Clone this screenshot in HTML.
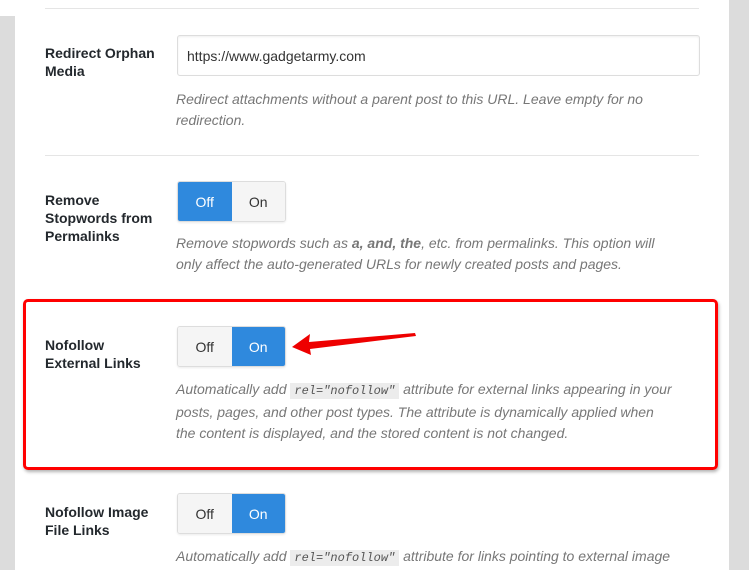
<!DOCTYPE html>
<html><head><style>
*{margin:0;padding:0;box-sizing:border-box}
body{width:749px;height:570px;overflow:hidden;background:#fff;font-family:"Liberation Sans",sans-serif;position:relative}
.abs{position:absolute}
.lbl{position:absolute;left:45px;font-size:14px;font-weight:bold;color:#23282d;line-height:18px}
.desc{position:absolute;left:176px;font-size:14px;font-style:italic;color:#777;line-height:21px;width:530px}
.sep{position:absolute;left:45px;width:654px;height:1px;background:#e5e5e5}
.tg{position:absolute;left:177px;width:109px;height:41px;border:1px solid #ddd;border-radius:3px;display:flex;overflow:hidden;box-shadow:0 1px 2px rgba(0,0,0,.08)}
.tg div{width:54px;display:flex;align-items:center;justify-content:center;font-size:14px;color:#333;background:#f5f5f5}
.tg div.on{background:#2f89dd;color:#fff}
code{font-family:"Liberation Mono",monospace;font-style:italic;background:#ececec;padding:1px 4px;font-size:12px;color:#555}
</style></head><body>
<div class="abs" style="left:0;top:16px;width:15px;height:554px;background:#dcdcdc"></div>
<div class="abs" style="left:729px;top:0;width:20px;height:570px;background:#dcdcdc"></div>
<div class="sep" style="top:8px"></div>
<div class="lbl" style="top:44px">Redirect Orphan<br>Media</div>
<div class="abs" style="left:177px;top:35px;width:523px;height:41px;border:1px solid #ddd;border-radius:3px;box-shadow:inset 0 1px 2px rgba(0,0,0,.07);font-size:14px;color:#333;padding:12px 0 0 9px">https://www.gadgetarmy.com</div>
<div class="desc" style="top:89px;width:500px">Redirect attachments without a parent post to this URL. Leave empty for no redirection.</div>
<div class="sep" style="top:155px"></div>
<div class="lbl" style="top:191px">Remove<br>Stopwords from<br>Permalinks</div>
<div class="tg" style="top:181px"><div class="on">Off</div><div>On</div></div>
<div class="desc" style="top:233px">Remove stopwords such as <b>a, and, the</b>, etc. from permalinks. This option will<br>only affect the auto-generated URLs for newly created posts and pages.</div>
<div class="abs" style="left:23px;top:299px;width:695px;height:171px;border:3px solid #f00;border-radius:5px;box-shadow:1px 2px 3px rgba(0,0,0,.3)"></div>
<div class="lbl" style="top:336px">Nofollow<br>External Links</div>
<div class="tg" style="top:326px"><div>Off</div><div class="on">On</div></div>
<svg class="abs" style="left:288px;top:328px" width="132" height="28"><polygon points="4,19 22,6 21,14 127,5 128,8 22,21 23,27" fill="#ee0000"/></svg>
<div class="desc" style="top:379px">Automatically add <code>rel="nofollow"</code> attribute for external links appearing in your<br>posts, pages, and other post types. The attribute is dynamically applied when<br>the content is displayed, and the stored content is not changed.</div>
<div class="lbl" style="top:503px">Nofollow Image<br>File Links</div>
<div class="tg" style="top:493px"><div>Off</div><div class="on">On</div></div>
<div class="desc" style="top:546px;white-space:nowrap">Automatically add <code>rel="nofollow"</code> attribute for links pointing to external image</div>
</body></html>
